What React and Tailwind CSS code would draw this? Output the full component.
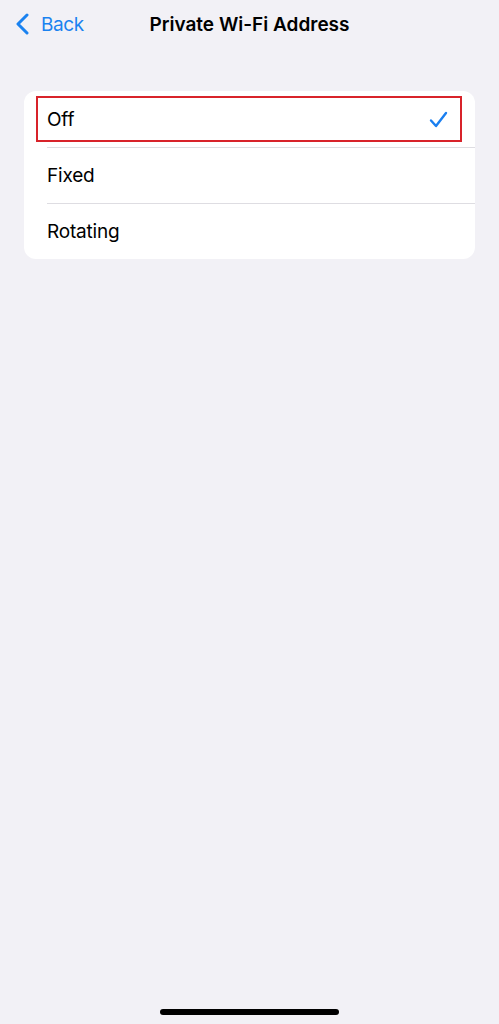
const rows = ["Off", "Fixed", "Rotating"]

export default function App() {
    return (
        <div
            className="relative flex h-[1024px] w-full flex-col bg-[#f2f1f6] text-black"
            style={{ fontFamily: "Inter, 'Liberation Sans', sans-serif" }}
        >
            <div className="relative flex h-[48px] items-center">
                <div className="flex items-center pl-[15px] text-[#1a82f0]">
                    <svg width="15" height="22" viewBox="0 0 15 22" fill="none">
                        <path d="M12 2 L3 11 L12 20" stroke="currentColor" strokeWidth="3" strokeLinecap="round" strokeLinejoin="round" />
                    </svg>
                    <span className="ml-[11px] text-[19px] leading-none tracking-[-0.4px]">Back</span>
                </div>
                <div className="absolute left-0 right-0 top-0 flex h-[48px] items-center justify-center">
                    <span className="text-[19px] font-semibold leading-none">Private Wi-Fi Address</span>
                </div>
            </div>

            <div className="mx-[24px] mt-[43px] overflow-hidden rounded-[12px] bg-white">
                {rows.map((label, i) => (
                    <div key={label} className="relative flex h-[56px] items-center">
                        {i > 0 ? <div className="absolute left-[23px] right-0 top-0 h-px bg-[#dedde2]" /> : null}
                        <span className="pl-[23px] text-[19px] leading-none tracking-[-0.2px]">{label}</span>
                        {i === 0 ? (
                            <>
                                <svg className="absolute left-[405px] top-[20px]" width="19" height="17" viewBox="0 0 19 17" fill="none">
                                    <path d="M2 9.5 L7 15 L17 2" stroke="#1a7ff0" strokeWidth="2.4" strokeLinecap="round" strokeLinejoin="round" />
                                </svg>
                                <div className="absolute left-[12px] top-[5px] h-[46px] w-[426px] border-2 border-[#d8232a]" />
                            </>
                        ) : null}
                    </div>
                ))}
            </div>

            <div className="mt-auto mb-[9px] flex justify-center">
                <div className="h-[6px] w-[179px] rounded-full bg-black" />
            </div>
        </div>
    )
}
